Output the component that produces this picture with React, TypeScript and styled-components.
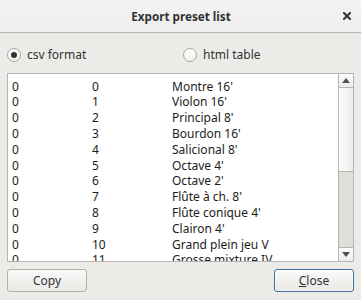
import React from "react";
import styled, { createGlobalStyle } from "styled-components";

const Global = createGlobalStyle`
  html, body { margin: 0; padding: 0; background: #edebe8; }
  body { font-family: "Noto Sans", "DejaVu Sans", sans-serif; color: #2e3436; }
  * { box-sizing: border-box; }
`;

const Window = styled.div`
  width: 361px;
  height: 300px;
  background: #edebe8;
  display: flex;
  flex-direction: column;
  overflow: hidden;
`;

const TitleBar = styled.div`
  height: 33px;
  flex: none;
  background: linear-gradient(#f4f3f1, #efeeec);
  border-bottom: 1px solid #b9b7b3;
  display: grid;
  grid-template-columns: 1fr auto 1fr;
  align-items: center;
`;

const Title = styled.div`
  grid-column: 2;
  font-size: 11.7px;
  font-weight: 700;
  color: #2e3436;
  padding-left: 1px;
`;

const CloseX = styled.div`
  grid-column: 3;
  justify-self: end;
  margin-right: 10px;
  width: 8px;
  height: 8px;
  display: flex;
`;

const Body = styled.div`
  flex: 1;
  display: flex;
  flex-direction: column;
  padding: 0 7px;
`;

const RadioRow = styled.div`
  display: grid;
  grid-template-columns: 176px 1fr;
  height: 40px;
  align-items: center;
  padding-top: 3px;
`;

const RadioLabel = styled.label`
  display: flex;
  align-items: center;
  gap: 6px;
  font-size: 12px;
  color: #2e3436;
`;

const RadioCircle = styled.span<{ $checked?: boolean }>`
  width: 14px;
  height: 14px;
  border-radius: 50%;
  border: 1px solid #a8a6a2;
  background: linear-gradient(#ffffff, #f0efed);
  display: flex;
  align-items: center;
  justify-content: center;
  &::after {
    content: "";
    width: 6px;
    height: 6px;
    border-radius: 50%;
    background: #2e3436;
    display: ${(p) => (p.$checked ? "block" : "none")};
  }
`;

const ListBox = styled.div`
  height: 189px;
  border: 1px solid #b6b4b0;
  background: #fff;
  display: flex;
  overflow: hidden;
`;

const ListContent = styled.div`
  flex: 1;
  padding: 4.7px 0 0 4px;
  overflow: hidden;
`;

const Row = styled.div`
  display: grid;
  grid-template-columns: 80px 80px 1fr;
  height: 15.8px;
  line-height: 15.8px;
  font-size: 12px;
  color: #1c1c1c;
  white-space: nowrap;
`;

const ScrollBar = styled.div`
  width: 15px;
  flex: none;
  border-left: 1px solid #b6b4b0;
  background: #dfdedb;
  display: flex;
  flex-direction: column;
`;

const ArrowButton = styled.div<{ $down?: boolean }>`
  height: 14px;
  flex: none;
  background: linear-gradient(#fbfbfa, #eeedeb);
  ${(p) => (p.$down ? "border-top: 1px solid #b6b4b0;" : "border-bottom: 1px solid #b6b4b0;")}
  display: flex;
  align-items: center;
  justify-content: center;
`;

const Thumb = styled.div`
  height: 84px;
  flex: none;
  background: linear-gradient(90deg, #fdfdfd, #ecebe9);
  border-bottom: 1px solid #b6b4b0;
`;

const Track = styled.div`
  flex: 1;
`;

const ButtonRow = styled.div`
  display: flex;
  justify-content: space-between;
  margin-top: 7px;
`;

const Button = styled.button<{ $focused?: boolean }>`
  width: 80px;
  height: 23px;
  border-radius: 3px;
  border: 1px solid ${(p) => (p.$focused ? "#3d6fa6" : "#b2b0ac")};
  background: linear-gradient(#fafaf9, #e9e8e5);
  font-family: "Noto Sans", "DejaVu Sans", sans-serif;
  font-size: 12px;
  color: #2e3436;
  padding: 0;
  display: flex;
  align-items: center;
  justify-content: center;
  box-shadow: ${(p) => (p.$focused ? "inset 0 0 0 1px rgba(255,255,255,0.6)" : "none")};
`;

const Mnemonic = styled.span`
  text-decoration: underline;
`;

const rows: [string, string, string][] = [
  ["0", "0", "Montre 16'"],
  ["0", "1", "Violon 16'"],
  ["0", "2", "Principal 8'"],
  ["0", "3", "Bourdon 16'"],
  ["0", "4", "Salicional 8'"],
  ["0", "5", "Octave 4'"],
  ["0", "6", "Octave 2'"],
  ["0", "7", "Flûte à ch. 8'"],
  ["0", "8", "Flûte conique 4'"],
  ["0", "9", "Clairon 4'"],
  ["0", "10", "Grand plein jeu V"],
  ["0", "11", "Grosse mixture IV"],
];

export default function App() {
  return (
    <>
      <Global />
      <Window>
        <TitleBar>
          <Title>Export preset list</Title>
          <CloseX>
            <svg width="8" height="8" viewBox="0 0 8 8">
              <path d="M1 1 L7 7 M7 1 L1 7" stroke="#2e3436" strokeWidth="2" strokeLinecap="square" />
            </svg>
          </CloseX>
        </TitleBar>
        <Body>
          <RadioRow>
            <RadioLabel>
              <RadioCircle $checked />
              csv format
            </RadioLabel>
            <RadioLabel>
              <RadioCircle />
              html table
            </RadioLabel>
          </RadioRow>
          <ListBox>
            <ListContent>
              {rows.map((r, i) => (
                <Row key={i}>
                  <span>{r[0]}</span>
                  <span>{r[1]}</span>
                  <span>{r[2]}</span>
                </Row>
              ))}
            </ListContent>
            <ScrollBar>
              <ArrowButton>
                <svg width="8" height="5" viewBox="0 0 8 5">
                  <path d="M0 5 L4 0 L8 5 Z" fill="#505050" />
                </svg>
              </ArrowButton>
              <Thumb />
              <Track />
              <ArrowButton $down>
                <svg width="8" height="5" viewBox="0 0 8 5">
                  <path d="M0 0 L8 0 L4 5 Z" fill="#505050" />
                </svg>
              </ArrowButton>
            </ScrollBar>
          </ListBox>
          <ButtonRow>
            <Button>Copy</Button>
            <Button $focused>
              <Mnemonic>C</Mnemonic>lose
            </Button>
          </ButtonRow>
        </Body>
      </Window>
    </>
  );
}
